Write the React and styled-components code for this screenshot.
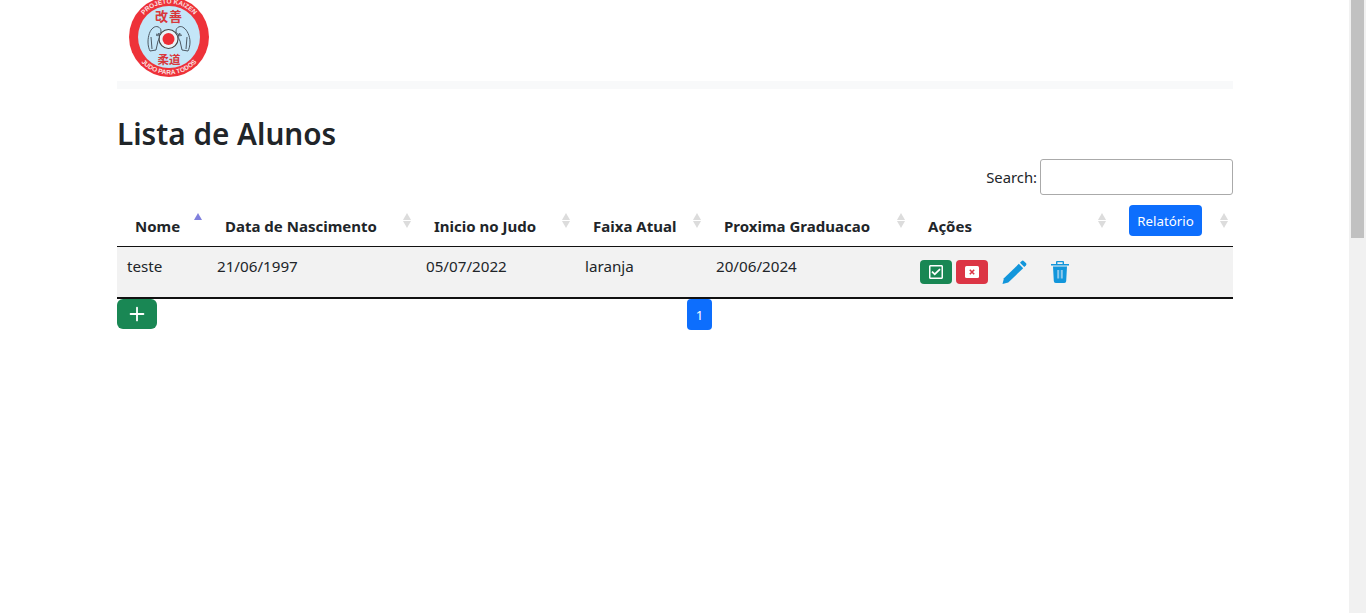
import React from "react";
import styled, { createGlobalStyle } from "styled-components";
import { FaRegCheckSquare } from "react-icons/fa";
import { Plus } from "lucide-react";

const GlobalStyle = createGlobalStyle`
  body {
    margin: 0;
    background: #fff;
    color: #212529;
    font-family: "Noto Sans", "Liberation Sans", sans-serif;
    font-size: 15.2px;
    line-height: 24px;
  }
`;

const Page = styled.div`
  display: flex;
  height: 613px;
  overflow: hidden;
`;

const Main = styled.main`
  flex: 1;
  min-width: 0;
`;

const ScrollTrack = styled.div`
  width: 17px;
  background: #f1f1f1;
`;

const ScrollThumb = styled.div`
  width: 13px;
  height: 238px;
  margin: 0 2px;
  background: #c1c1c1;
`;

const Container = styled.div`
  width: 1116px;
  margin-left: 117px;
`;

const Navbar = styled.nav`
  height: 89px;
  display: flex;
  flex-direction: column;
`;

const LogoRow = styled.div`
  height: 81px;
  padding-left: 12px;
`;

const Logo = styled.svg`
  display: block;
  width: 80px;
  height: 80px;
  margin-top: -3px;
`;

const NavBand = styled.div`
  height: 8px;
  background: #f8f9fa;
`;

const Title = styled.h1`
  margin: 26px 0 0;
  font-size: 29.7px;
  line-height: 38px;
  font-weight: 600;
`;

const SearchRow = styled.div`
  display: flex;
  justify-content: flex-end;
  align-items: center;
  gap: 3px;
  margin-top: 6px;
`;

const SearchLabel = styled.label`
  font-size: 14.8px;
`;

const SearchInput = styled.input`
  box-sizing: border-box;
  width: 193px;
  height: 36px;
  border: 1px solid #aaa;
  border-radius: 3px;
  background: #fff;
`;

const Table = styled.table`
  width: 1116px;
  margin-top: 10px;
  border-collapse: collapse;
  table-layout: fixed;
`;

const Col = styled.col`
  width: ${(p) => p.$w}px;
`;

const Th = styled.th`
  position: relative;
  height: 41px;
  box-sizing: border-box;
  padding: 0 18px 8px;
  text-align: left;
  vertical-align: bottom;
  font-size: 15px;
  font-weight: 700;
  border-bottom: 1px solid #111;
`;

const Sort = styled.span`
  position: absolute;
  right: 5px;
  top: 8px;
  display: flex;
  flex-direction: column;
  gap: 1px;
`;

const Tri = styled.i`
  display: block;
  width: 0;
  height: 0;
  border-left: 4.5px solid transparent;
  border-right: 4.5px solid transparent;
  border-${(p) => (p.$down ? "top" : "bottom")}: 7px solid ${(p) => (p.$on ? "#8080dd" : p.$off ? "transparent" : "#dcdcdc")};
`;

const Td = styled.td`
  height: 50px;
  box-sizing: border-box;
  padding: 7px 10px;
  vertical-align: top;
  background: #f2f2f2;
  border-bottom: 2px solid #111;
`;

const ActionRow = styled.div`
  display: flex;
  align-items: center;
  height: 36px;
`;

const IconBtn = styled.button`
  width: 32px;
  height: 24px;
  padding: 0;
  margin-right: ${(p) => p.$mr}px;
  display: flex;
  align-items: center;
  justify-content: center;
  border: 0;
  border-radius: 4px;
  color: #fff;
  background: ${(p) => p.$bg};
`;

const ReportBtn = styled.button`
  display: block;
  width: 73px;
  height: 31px;
  margin: 0 0 2px;
  padding: 0;
  border: 0;
  border-radius: 4px;
  font: inherit;
  font-weight: 400;
  font-size: 13.3px;
  color: #fff;
  background: #0d6efd;
`;

const Footer = styled.div`
  display: flex;
  align-items: flex-start;
`;

const AddBtn = styled.button`
  width: 40px;
  height: 30px;
  padding: 0;
  display: flex;
  align-items: center;
  justify-content: center;
  border: 0;
  border-radius: 6px;
  color: #fff;
  background: #198754;
`;

const PageBtn = styled.a`
  margin-left: 530px;
  width: 25px;
  height: 31px;
  display: flex;
  align-items: center;
  justify-content: center;
  border-radius: 4px;
  font-size: 13.3px;
  color: #fff;
  background: #0d6efd;
`;

const PencilSvg = styled.svg`
  margin-right: 24px;
`;

const SortIcon = ({ on }) => (
  <Sort>
    <Tri $on={on} />
    <Tri $down $off={on} />
  </Sort>
);

const columns = [
  ["Nome", 90],
  ["Data de Nascimento", 209],
  ["Inicio no Judo", 159],
  ["Faixa Atual", 131],
  ["Proxima Graduacao", 204],
  ["Ações", 201],
];

const CloseIcon = () => (
  <svg width="14" height="12" viewBox="0 0 14 12">
    <rect width="14" height="12" rx="1.5" fill="#fff" />
    <path d="M4.8 3.8l4.4 4.4M9.2 3.8L4.8 8.2" stroke="#dc3545" strokeWidth="1.6" />
  </svg>
);

const PencilIcon = () => (
  <PencilSvg width="25" height="26" viewBox="0 0 26 26">
    <path fill="#1296db" d="M.5 25.5L2 19.5 17.5 4.5 22 9 6.5 24z" />
    <path fill="#1296db" d="M18.7 3.3l1.6-1.6a1.8 1.8 0 0 1 2.5 0l2 2a1.8 1.8 0 0 1 0 2.5l-1.6 1.6z" />
  </PencilSvg>
);

const TrashIcon = () => (
  <svg width="18" height="22" viewBox="0 0 18 22">
    <path fill="#1296db" d="M6 0h6a1 1 0 0 1 1 1v2h5v1.4H0V3h5V1a1 1 0 0 1 1-1zm.4 1.2V3h5.2V1.2z" />
    <path fill="#1296db" d="M2 5.6h14l-.8 14.4a2 2 0 0 1-2 2H4.8a2 2 0 0 1-2-2z" />
    <path fill="#8cc8ec" d="M6.2 9h2v8.5h-2zM9.8 9h2v8.5h-2z" />
  </svg>
);

const LogoMark = () => (
  <Logo viewBox="0 0 80 80">
    <defs>
      <path id="logoTop" d="M6.5 40a33.5 33.5 0 0 1 67 0" />
      <path id="logoBottom" d="M2.5 40a37.5 37.5 0 0 0 75 0" />
    </defs>
    <circle cx="40" cy="40" r="40" fill="#ee3239" />
    <circle cx="40" cy="40" r="31" fill="#c4e6f8" />
    <text fontSize="6.5" fontWeight="700" fill="#fbe3e3" fontFamily="Liberation Sans, sans-serif">
      <textPath href="#logoTop" startOffset="50%" textAnchor="middle">PROJETO KAIZEN</textPath>
    </text>
    <text fontSize="6.5" fontWeight="700" fill="#fbe3e3" fontFamily="Liberation Sans, sans-serif">
      <textPath href="#logoBottom" startOffset="50%" textAnchor="middle">JUDO PARA TODOS</textPath>
    </text>
    <text x="40" y="24" textAnchor="middle" fontSize="13" fontWeight="700" letterSpacing="1" fill="#d8383c" fontFamily="Noto Sans CJK JP, sans-serif">改善</text>
    <text x="40" y="67" textAnchor="middle" fontSize="11.5" fontWeight="700" fill="#d8383c" fontFamily="Noto Sans CJK JP, sans-serif">柔道</text>
    <circle cx="39.5" cy="42" r="9.5" fill="#e8f3f8" stroke="#444" strokeWidth="1.1" />
    <circle cx="39.5" cy="42" r="6" fill="#ee2d35" />
    <g fill="none" stroke="#3f4a54" strokeWidth="0.9">
      <path d="M24 31c-3 2-5 8-5 14 0 4 1 7 2 9l6-1 2-9c2-3 2-6 0-8" />
      <path d="M24 31c3-3 8-1 8 3 0 3-3 4-5 3M22 40l1 12M27 38c2 1 3 1 4 0" />
      <path d="M55 31c3 2 6 8 6 14 0 4-1 7-2 9l-6-1-2-9c-2-3-2-6 0-8" />
      <path d="M55 31c-3-3-8-1-8 3 0 3 3 4 5 3M58 40l-1 12M53 38c-2 1-3 1-4 0" />
    </g>
  </Logo>
);

export default function App() {
  return (
    <Page>
      <GlobalStyle />
      <Main>
        <Container>
          <Navbar>
            <LogoRow>
              <LogoMark />
            </LogoRow>
            <NavBand />
          </Navbar>
          <Title>Lista de Alunos</Title>
          <SearchRow>
            <SearchLabel>Search:</SearchLabel>
            <SearchInput type="search" />
          </SearchRow>
          <Table>
            <colgroup>
              {columns.map(([name, w]) => (
                <Col key={name} $w={w} />
              ))}
              <Col $w={122} />
            </colgroup>
            <thead>
              <tr>
                {columns.map(([name], i) => (
                  <Th key={name}>
                    {name}
                    <SortIcon on={i === 0} />
                  </Th>
                ))}
                <Th>
                  <ReportBtn>Relatório</ReportBtn>
                  <SortIcon />
                </Th>
              </tr>
            </thead>
            <tbody>
              <tr>
                <Td>teste</Td>
                <Td>21/06/1997</Td>
                <Td>05/07/2022</Td>
                <Td>laranja</Td>
                <Td>20/06/2024</Td>
                <Td>
                  <ActionRow>
                    <IconBtn $bg="#198754" $mr={4}>
                      <FaRegCheckSquare size={16} />
                    </IconBtn>
                    <IconBtn $bg="#dc3545" $mr={14}>
                      <CloseIcon />
                    </IconBtn>
                    <PencilIcon />
                    <TrashIcon />
                  </ActionRow>
                </Td>
                <Td />
              </tr>
            </tbody>
          </Table>
          <Footer>
            <AddBtn>
              <Plus size={22} strokeWidth={2} />
            </AddBtn>
            <PageBtn>1</PageBtn>
          </Footer>
        </Container>
      </Main>
      <ScrollTrack>
        <ScrollThumb />
      </ScrollTrack>
    </Page>
  );
}
